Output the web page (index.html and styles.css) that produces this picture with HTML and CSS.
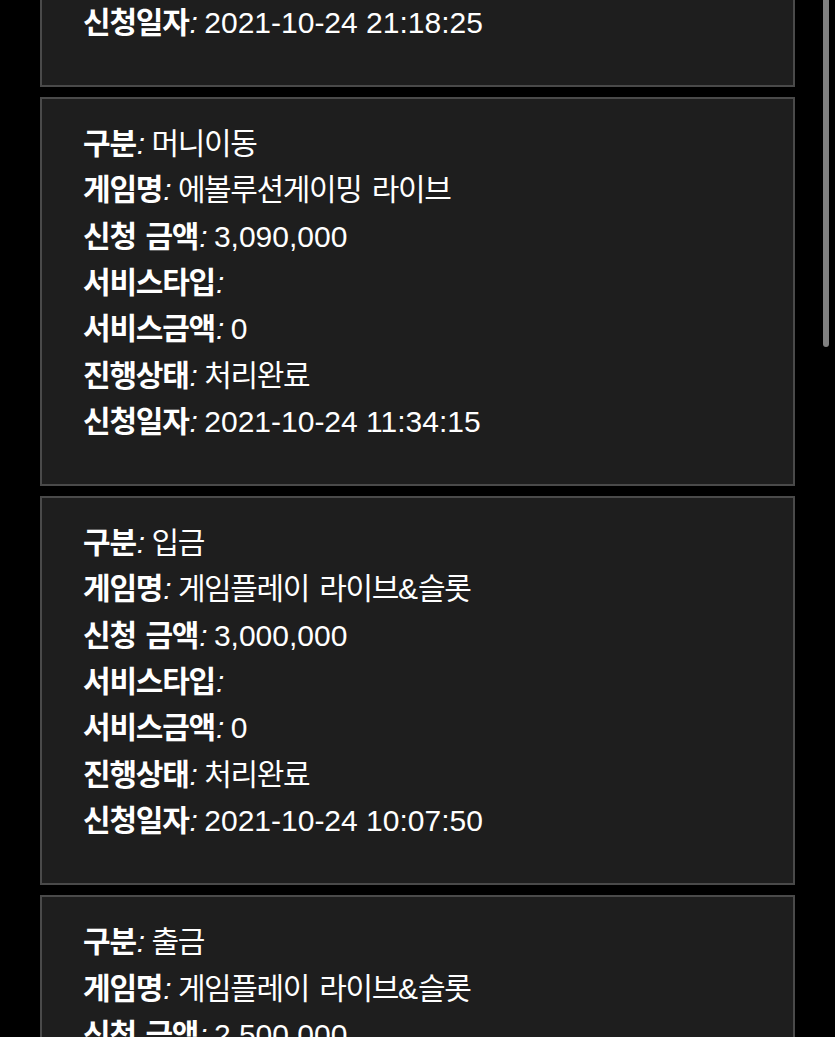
FILE: index.html
```html
<!DOCTYPE html>
<html lang="ko">
<head>
    <meta charset="UTF-8">
    <meta name="viewport" content="width=device-width, initial-scale=1.0">
    <title>신청내역</title>
    <link rel="stylesheet" href="styles.css">
</head>
<body>
    <div id="list">
        <div class="card">
            <p><b class="lbl">구분</b><i>: </i><span class="ko">입금</span></p>
            <p><b class="lbl">게임명</b><i>: </i><span class="ko">에볼루션게이밍 라이브</span></p>
            <p><b class="lbl">신청 금액</b><i>: </i>1,000,000</p>
            <p><b class="lbl">서비스타입</b><i>:</i></p>
            <p><b class="lbl">서비스금액</b><i>: </i>0</p>
            <p><b class="lbl">진행상태</b><i>: </i><span class="ko">처리완료</span></p>
            <p><b class="lbl">신청일자</b><i>: </i>2021-10-24 21:18:25</p>
        </div>
        <div class="card">
            <p><b class="lbl">구분</b><i>: </i><span class="ko">머니이동</span></p>
            <p><b class="lbl">게임명</b><i>: </i><span class="ko">에볼루션게이밍 라이브</span></p>
            <p><b class="lbl">신청 금액</b><i>: </i>3,090,000</p>
            <p><b class="lbl">서비스타입</b><i>:</i></p>
            <p><b class="lbl">서비스금액</b><i>: </i>0</p>
            <p><b class="lbl">진행상태</b><i>: </i><span class="ko">처리완료</span></p>
            <p><b class="lbl">신청일자</b><i>: </i>2021-10-24 11:34:15</p>
        </div>
        <div class="card">
            <p><b class="lbl">구분</b><i>: </i><span class="ko">입금</span></p>
            <p><b class="lbl">게임명</b><i>: </i><span class="ko">게임플레이 라이브</span>&amp;<span class="ko">슬롯</span></p>
            <p><b class="lbl">신청 금액</b><i>: </i>3,000,000</p>
            <p><b class="lbl">서비스타입</b><i>:</i></p>
            <p><b class="lbl">서비스금액</b><i>: </i>0</p>
            <p><b class="lbl">진행상태</b><i>: </i><span class="ko">처리완료</span></p>
            <p><b class="lbl">신청일자</b><i>: </i>2021-10-24 10:07:50</p>
        </div>
        <div class="card">
            <p><b class="lbl">구분</b><i>: </i><span class="ko">출금</span></p>
            <p><b class="lbl">게임명</b><i>: </i><span class="ko">게임플레이 라이브</span>&amp;<span class="ko">슬롯</span></p>
            <p><b class="lbl">신청 금액</b><i>: </i>2,500,000</p>
            <p><b class="lbl">서비스타입</b><i>:</i></p>
            <p><b class="lbl">서비스금액</b><i>: </i>0</p>
            <p><b class="lbl">진행상태</b><i>: </i><span class="ko">처리완료</span></p>
            <p><b class="lbl">신청일자</b><i>: </i>2021-10-24 09:41:02</p>
        </div>
    </div>

    <div id="scrollThumb"></div>
</body>
</html>
```

FILE: styles.css
```css
html, body{
    margin: 0;
    height: 100%;
    overflow: hidden;
    background-color: black;
}
body{
    color: white;
    font-family: "Liberation Sans", "Noto Sans CJK KR", sans-serif;
    font-size: 30px;
}

/* page is scrolled: first card only shows its last line */
#list{
    margin-top: -302px;
    padding: 0 40px;
    display: flex;
    flex-direction: column;
    gap: 10px;
}

.card{
    background-color: #1e1e1e;
    border: 2px solid #4a4a4a;
    padding: 19px 40px 42px 41px;
}
.card > p{
    margin: 0;
    height: 46.3px;
    line-height: 46.3px;
    white-space: pre;
}

.lbl{
    font-family: "Noto Sans CJK KR", sans-serif;
    font-weight: 700;
    letter-spacing: -0.04em;
    word-spacing: 0.08em;
}
.ko{
    font-family: "Noto Sans CJK KR", sans-serif;
    letter-spacing: -0.045em;
    word-spacing: 0.1em;
}
.card i{
    font-style: italic;
    margin-left: 1px;
    word-spacing: -2px;
}

#scrollThumb{
    position: fixed;
    top: 0;
    right: 6px;
    width: 6px;
    height: 347px;
    background-color: #808080;
    border-radius: 0 0 3px 3px;
}
```
